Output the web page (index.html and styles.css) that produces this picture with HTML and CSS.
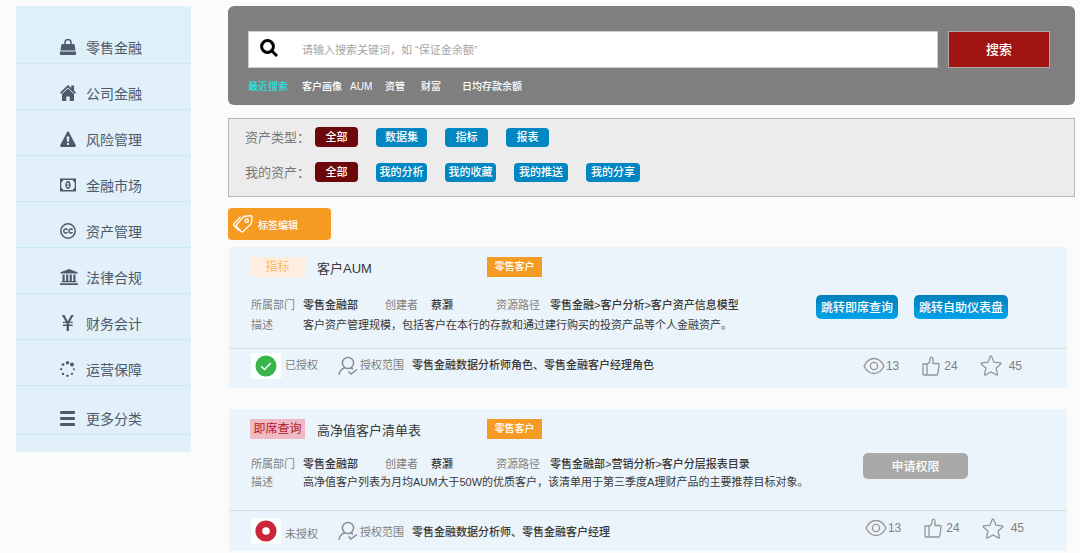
FILE: index.html
```html
<!DOCTYPE html>
<html lang="zh-CN">
<head>
    <meta charset="UTF-8">
    <title>数据资产</title>
    <meta name="viewport" content="width=device-width, initial-scale=1">
    <link rel="stylesheet" href="styles.css">
</head>
<body>
    <!-- shared outline icons -->
    <svg class="symbols" aria-hidden="true">
        <symbol id="icon-user" viewBox="0 0 20 20">
            <circle cx="10" cy="7" r="5.600"/>
            <path d="M1 19c.3-3.600 2.200-6 5.800-7.400M13 11.800l2 1.500M10.500 15.500l2.500 2.500 6-4.500"/>
        </symbol>
        <symbol id="icon-eye" viewBox="0 0 22 18">
            <path d="M1 9c2.500-5 6-7.500 10-7.500S18.500 4 21 9c-2.500 5-6 7.500-10 7.500S3.500 14 1 9z"/>
            <circle cx="11" cy="9" r="3.600"/>
        </symbol>
        <symbol id="icon-like" viewBox="0 0 18 20">
            <path d="M1 8h4v11H2q-1 0-1-1zM5 8c2.500-.5 3.200-2 3.200-5.500 0-2 2.800-2 2.800.5V7.500h5q1.300 0 1.100 1.300l-1.300 9q-.2 1.200-1.300 1.200H5"/>
        </symbol>
        <symbol id="icon-star" viewBox="0 0 22 21">
            <path d="M10.200 1.500q.8-1.200 1.500 0L14 7.200l6.200.6q1.200.3.400 1.200L16 13.200l1.400 6q.1 1.200-1 .7L11 17l-5.400 2.900q-1.100.5-1-.7l1.400-6L1.400 9q-.8-.9.400-1.200L8 7.200z"/>
        </symbol>
    </svg>

    <nav class="sidebar">
        <a class="nav-item" href="#">
            <svg class="nav-icon" viewBox="0 0 16 16"><path d="M1.500 5h13l1 6.500H.5zM0 12.500h16V16H0z"/><path class="line" d="M5 7V3.500a3 3 0 0 1 6 0V7"/></svg>
            <span>零售金融</span>
        </a>
        <a class="nav-item" href="#">
            <svg class="nav-icon" viewBox="0 0 16 16"><path d="M8 0l3.200 3V.6h2.900v5.100L16 7.600l-1.100 1.300L8 2.500 1.100 8.900 0 7.600z"/><path d="M8 3.500l6 5.400V15q0 1-1 1H9.700v-4.500H6.300V16H3q-1 0-1-1V8.900z"/></svg>
            <span>公司金融</span>
        </a>
        <a class="nav-item" href="#">
            <svg class="nav-icon" viewBox="0 0 16 16"><path fill-rule="evenodd" d="M7.200.8q.8-1.200 1.600 0l7 13.500q.4 1.400-1 1.700H1.200q-1.400-.3-1-1.700zM6.700 5.500L7 10.800h2l.3-5.300zM7 12v2h2v-2z"/></svg>
            <span>风险管理</span>
        </a>
        <a class="nav-item" href="#">
            <svg class="nav-icon" viewBox="0 0 16 16"><path fill-rule="evenodd" d="M0 1.500h16v13H0zM3.300 2.900Q3 4.800 1.300 5.100v5.800Q3 11.200 3.300 13.100h9.400Q13 11.200 14.700 10.900V5.100Q13 4.800 12.700 2.900z"/><path fill-rule="evenodd" d="M8 4c1.800 0 2.700 1.800 2.700 4S9.800 12 8 12 5.300 10.200 5.300 8 6.200 4 8 4zM7.600 5.700L6.500 6.500v.8l.9-.3v2.500h-.9v.8h3v-.8h-.9V5.700z"/></svg>
            <span>金融市场</span>
        </a>
        <a class="nav-item" href="#">
            <svg class="nav-icon" viewBox="0 0 16 16"><circle class="line" cx="8" cy="8" r="7.200"/><path class="line" d="M7.400 6.900a2 2 0 1 0 0 2.300M12.500 6.900a2 2 0 1 0 0 2.300"/></svg>
            <span>资产管理</span>
        </a>
        <a class="nav-item" href="#">
            <svg class="nav-icon wide" viewBox="0 0 18 16"><path d="M9 0l8.500 3.300v1.200H.5V3.300zM2.500 5.500h2.200V12h1.400V5.500h2.200V12h1.400V5.500h2.200V12h1.400V5.500h2.200V12h.8v1.300H1.700V12h.8zM0 14.200h18V16H0z"/></svg>
            <span>法律合规</span>
        </a>
        <a class="nav-item" href="#">
            <svg class="nav-icon" viewBox="0 0 16 16"><path d="M1.800 0h2.700l3.300 6.200L11.100 0h2.700L9.900 6.700h2.800v1.400H9v1.400h3.700v1.400H9V16H6.600v-5.100H2.900V9.500h3.700V8.100H2.900V6.700h2.800z"/></svg>
            <span>财务会计</span>
        </a>
        <a class="nav-item" href="#">
            <svg class="nav-icon" viewBox="0 0 16 16"><circle cx="7.500" cy="1.800" r="1.700"/><circle cx="12" cy="3.600" r="2"/><circle cx="3" cy="3.600" r="1.400"/><circle cx="1.200" cy="8.200" r="1.100"/><circle cx="13.900" cy="8.200" r="1"/><circle cx="3" cy="12.900" r="1.200"/><circle cx="12" cy="12.900" r="1.100"/><circle cx="7.500" cy="14.800" r="1.200"/></svg>
            <span>运营保障</span>
        </a>
        <a class="nav-item more" href="#">
            <svg class="nav-icon" viewBox="0 0 16 16"><rect x="0" y="1" width="15" height="3" rx="1"/><rect x="0" y="7" width="15" height="3" rx="1"/><rect x="0" y="13" width="15" height="3" rx="1"/></svg>
            <span>更多分类</span>
        </a>
    </nav>

    <main class="main">
        <section class="search">
            <form class="search-row">
                <label class="search-box">
                    <svg class="search-icon" viewBox="0 0 18 18"><circle cx="7.500" cy="7.500" r="5.900"/><path d="M12 12l5 5"/></svg>
                    <input type="text" name="keyword" aria-label="搜索关键词" placeholder="请输入搜索关键词，如 “保证金余额”">
                </label>
                <button class="search-btn" type="button">搜索</button>
            </form>
            <div class="recent">
                <span class="recent-title">最近搜索</span>
                <a href="#">客户画像</a>
                <a href="#">AUM</a>
                <a href="#">资管</a>
                <a href="#">财富</a>
                <a href="#">日均存款余额</a>
            </div>
        </section>

        <section class="filters">
            <div class="filter-row">
                <span class="filter-label">资产类型：</span>
                <button class="chip active" type="button">全部</button>
                <button class="chip mid" type="button">数据集</button>
                <button class="chip" type="button">指标</button>
                <button class="chip" type="button">报表</button>
            </div>
            <div class="filter-row">
                <span class="filter-label">我的资产：</span>
                <button class="chip active" type="button">全部</button>
                <button class="chip mid" type="button">我的分析</button>
                <button class="chip mid" type="button">我的收藏</button>
                <button class="chip large" type="button">我的推送</button>
                <button class="chip large" type="button">我的分享</button>
            </div>
        </section>

        <button class="edit-tags" type="button">
            <svg class="tags-icon" viewBox="0 0 20 18"><path d="M10.500 1.500l7.500-.8q1.200 0 1.100 1.200l-.8 6.600-8.300 8.300q-.8.600-1.500 0L3.500 11.500q-.7-.8 0-1.500z"/><path d="M7.500 1.800L.9 8.800q-.6.800 0 1.500l5.300 5.500"/><circle cx="13.700" cy="5.700" r="1.700"/></svg>
            <span>标签编辑</span>
        </button>

        <article class="card">
            <header class="card-head">
                <span class="type metric">指标</span>
                <h2>客户AUM</h2>
                <span class="tag">零售客户</span>
            </header>
            <div class="card-body">
                <dl class="meta">
                    <dt>所属部门</dt><dd>零售金融部</dd>
                    <dt>创建者</dt><dd>蔡灏</dd>
                    <dt>资源路径</dt><dd>零售金融&gt;客户分析&gt;客户资产信息模型</dd>
                    <dt>描述</dt><dd class="desc">客户资产管理规模，包括客户在本行的存款和通过建行购买的投资产品等个人金融资产。</dd>
                </dl>
                <div class="actions">
                    <button class="action" type="button">跳转即席查询</button>
                    <button class="action" type="button">跳转自助仪表盘</button>
                </div>
            </div>
            <footer class="card-foot">
                <span class="status-icon">
                    <svg viewBox="0 0 22 22"><circle cx="11" cy="11" r="10.500" fill="#38b64c"/><path d="M6.200 11.300l3.300 3.200 6.300-6.500" fill="none" stroke="#fff" stroke-width="1.500"/></svg>
                </span>
                <span class="status">已授权</span>
                <svg class="user-icon"><use href="#icon-user"/></svg>
                <span class="scope-label">授权范围</span>
                <span class="scope">零售金融数据分析师角色、零售金融客户经理角色</span>
                <div class="stats">
                    <span class="stat views"><svg><use href="#icon-eye"/></svg>13</span>
                    <span class="stat likes"><svg><use href="#icon-like"/></svg>24</span>
                    <span class="stat stars"><svg><use href="#icon-star"/></svg>45</span>
                </div>
            </footer>
        </article>

        <article class="card pending">
            <header class="card-head">
                <span class="type query">即席查询</span>
                <h2>高净值客户清单表</h2>
                <span class="tag">零售客户</span>
            </header>
            <div class="card-body">
                <dl class="meta">
                    <dt>所属部门</dt><dd>零售金融部</dd>
                    <dt>创建者</dt><dd>蔡灏</dd>
                    <dt>资源路径</dt><dd>零售金融部&gt;营销分析&gt;客户分层报表目录</dd>
                    <dt>描述</dt><dd class="desc">高净值客户列表为月均AUM大于50W的优质客户，该清单用于第三季度A理财产品的主要推荐目标对象。</dd>
                </dl>
                <div class="actions">
                    <button class="action apply" type="button">申请权限</button>
                </div>
            </div>
            <footer class="card-foot">
                <span class="status-icon">
                    <svg viewBox="0 0 22 22"><circle cx="11" cy="11" r="7.200" fill="#fff" stroke="#c9283b" stroke-width="6.800"/></svg>
                </span>
                <span class="status">未授权</span>
                <svg class="user-icon"><use href="#icon-user"/></svg>
                <span class="scope-label">授权范围</span>
                <span class="scope">零售金融数据分析师、零售金融客户经理</span>
                <div class="stats">
                    <span class="stat views"><svg><use href="#icon-eye"/></svg>13</span>
                    <span class="stat likes"><svg><use href="#icon-like"/></svg>24</span>
                    <span class="stat stars"><svg><use href="#icon-star"/></svg>45</span>
                </div>
            </footer>
        </article>
    </main>
</body>
</html>
```
FILE: styles.css
```css
* {
    box-sizing: border-box;
}

body {
    display: flex;
    align-items: flex-start;
    gap: 37px;
    margin: 0;
    padding: 6px 5px 2px 16px;
    font-family: "Liberation Sans", "Noto Sans CJK SC", sans-serif;
    font-size: 11px;
    color: #383838;
    background-color: #fbfbfb;
}

button, input {
    font-family: inherit;
}

button {
    padding: 0 0 2px;
    border: none;
    color: #fff;
    font-weight: 500;
    white-space: nowrap;
    cursor: pointer;
}

a {
    color: inherit;
    text-decoration: none;
}

.symbols {
    display: none;
}

/* Sidebar */
.sidebar {
    flex: none;
    width: 175px;
    padding: 12px 0 17px;
    background: linear-gradient(#def0f8, #e2f0fa 100px);
}

.nav-item {
    display: flex;
    align-items: center;
    gap: 10px;
    height: 46px;
    padding: 13px 0 0 44px;
    border-bottom: 1px solid #cbe9f8;
    color: #4d5a6b;
    font-size: 14px;
}

.nav-item.more {
    height: 49px;
    padding-top: 16px;
}

.nav-icon {
    flex: none;
    width: 16px;
    height: 16px;
    fill: #4d5a6b;
}

.nav-icon.wide {
    width: 18px;
    margin-right: -2px;
}

.nav-icon .line {
    fill: none;
    stroke: #4d5a6b;
    stroke-width: 1.5;
}

.main {
    flex: 1;
    min-width: 0;
}

/* Search */
.search {
    height: 99px;
    padding: 25px 25px 0 20px;
    border-radius: 6px;
    background-color: #7f7f7f;
}

.search-row {
    display: flex;
    gap: 10px;
    height: 37px;
}

.search-box {
    display: flex;
    flex: 1;
    align-items: center;
    gap: 24px;
    padding-left: 11px;
    border: 1px solid #ccc;
    background-color: #fff;
}

.search-icon {
    flex: none;
    width: 18px;
    height: 18px;
    margin-bottom: 4px;
    fill: none;
    stroke: #000;
    stroke-width: 3;
}

.search-box input {
    flex: 1;
    padding: 0;
    border: none;
    outline: none;
    font-size: 11px;
}

.search-box input::placeholder {
    color: #a6a6a6;
}

.search-btn {
    width: 102px;
    border: 1px solid #b9a5a5;
    background-color: #a21412;
    font-size: 13px;
}

.recent {
    display: grid;
    grid-template-columns: 54px 48px 35px 36px 41px auto;
    margin-top: 11px;
    color: #fff;
    font-size: 10px;
    font-weight: 500;
    line-height: 16px;
}

.recent-title {
    color: #27e3e3;
}

/* Filters */
.filters {
    display: flex;
    flex-direction: column;
    gap: 15px;
    height: 79px;
    margin-top: 13px;
    padding: 8px 16px;
    border: 1px solid #b5b5b5;
    background-color: #ececec;
}

.filter-row {
    display: flex;
    align-items: center;
    gap: 18px;
    height: 20px;
}

.filter-label {
    width: 52px;
    padding-bottom: 2px;
    color: #777;
    font-size: 13px;
    white-space: nowrap;
}

.chip {
    width: 43px;
    height: 19px;
    border-radius: 4px;
    background-color: #0086c0;
    font-size: 11px;
}

.chip.active {
    height: 20px;
    background-color: #6c080c;
}

.chip.mid {
    width: 51px;
}

.chip.large {
    width: 54px;
}

.edit-tags {
    display: flex;
    align-items: center;
    gap: 5px;
    width: 103px;
    height: 32px;
    margin-top: 11px;
    padding: 0 0 0 5px;
    border-radius: 4px;
    background-color: #f59b23;
    font-size: 10px;
}

.tags-icon {
    width: 20px;
    height: 18px;
    fill: none;
    stroke: #fff;
    stroke-width: 1.3;
}

/* Cards */
.card {
    margin: 7px 8px 0 1px;
    background-color: #ebf4fa;
}

.card + .card {
    margin-top: 21px;
}

.card-head {
    display: grid;
    grid-template-columns: 55px 158px auto;
    column-gap: 12px;
    align-items: center;
    justify-content: start;
    height: 40px;
    padding-left: 21px;
}

.card-head h2 {
    margin: 0;
    font-size: 13px;
    font-weight: 400;
}

.type {
    font-size: 12px;
    line-height: 20px;
    text-align: center;
}

.metric {
    color: #fbb95c;
    background-color: #ffeee0;
}

.query {
    color: #b5182b;
    background-color: #efbac4;
}

.tag {
    width: 55px;
    color: #fff;
    background-color: #f59b23;
    font-size: 10px;
    font-weight: 500;
    line-height: 20px;
    text-align: center;
}

.card-body {
    display: flex;
    align-items: flex-start;
    justify-content: space-between;
    height: 61px;
    padding: 8px 59px 0 22px;
}

.meta {
    display: grid;
    grid-template-columns: 52px 82px 46px 65px 54px auto;
    margin: 0;
    line-height: 20px;
    white-space: nowrap;
}

.meta dt {
    color: #808080;
}

.meta dd {
    margin: 0;
    font-weight: 500;
}

.meta .desc {
    grid-column: 2 / -1;
    font-weight: 400;
}

.actions {
    display: flex;
    gap: 16px;
}

.action {
    height: 24px;
    padding: 0 5px 1px;
    border-radius: 5px;
    background: linear-gradient(#0080bb, #00a3ea);
    font-size: 12px;
}

.action.apply {
    width: 105px;
    height: 26px;
    background: #a9a9a9;
}

.pending .card-body {
    padding: 4px 99px 0 22px;
}

.pending .meta {
    margin-top: 2px;
    line-height: 18px;
}

.card-foot {
    display: flex;
    align-items: center;
    height: 40px;
    padding: 0 45px 6px 22px;
    border-top: 1px solid #d3dde0;
    color: #808080;
}

.status-icon {
    display: flex;
    align-items: center;
    justify-content: center;
    width: 30px;
    height: 26px;
    background-color: #fdfefe;
}

.status-icon svg {
    width: 22px;
    height: 22px;
}

.status {
    width: 53px;
    margin-left: 4px;
}

.status, .scope-label, .scope {
    padding-bottom: 3px;
}

.user-icon {
    width: 20px;
    height: 20px;
    margin-right: 2px;
    fill: none;
    stroke: #8c8c8c;
    stroke-width: 1.5;
}

.scope-label {
    width: 52px;
}

.scope {
    color: #383838;
    font-weight: 500;
}

.stats {
    display: flex;
    margin-left: auto;
    font-size: 12px;
}

.stat {
    display: flex;
    align-items: center;
}

.stat svg {
    fill: none;
    stroke: #969696;
    stroke-width: 1.3;
}

.views svg {
    width: 22px;
    height: 18px;
    margin-right: 1px;
}

.likes {
    margin-left: 23px;
}

.likes svg {
    width: 18px;
    height: 20px;
    margin-right: 4px;
}

.stars {
    margin-left: 22px;
}

.stars svg {
    width: 22px;
    height: 21px;
    margin-right: 7px;
}

.pending .card-foot {
    height: 41px;
    padding: 0 43px 0 22px;
}

.pending .status {
    padding: 3px 0 0;
}

.pending .scope-label, .pending .scope {
    padding: 0;
}

.pending .stats {
    margin-bottom: 6px;
}
```
